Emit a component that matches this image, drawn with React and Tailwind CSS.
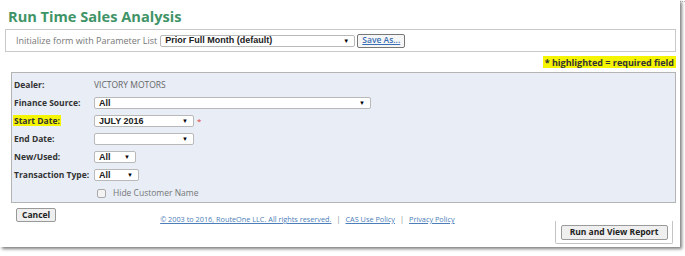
// Run Time Sales Analysis form

const rows = [
  { label: 'Finance Source:', value: 'All', width: 'w-[277px]' },
  { label: 'Start Date:', value: 'JULY 2016', width: 'w-[100px]', required: true },
  { label: 'End Date:', value: '', width: 'w-[100px]' },
  { label: 'New/Used:', value: 'All', width: 'w-[42px]' },
  { label: 'Transaction Type:', value: 'All', width: 'w-[45px]' },
]

function Select({ value, className = '' }) {
  return (
    <div
      className={`h-[12px] bg-white border border-[#b9b9b9] rounded-[2px] flex items-center justify-between pl-[4px] pr-[5px] font-['Liberation_Sans',sans-serif] font-bold text-[9px] text-[#222] leading-none ${className}`}
    >
      <span>{value}</span>
      <span className="text-[6px] text-black">▼</span>
    </div>
  )
}

export default function App() {
  return (
    <div className="w-[685px] h-[256px] bg-white relative overflow-hidden font-['Open_Sans',sans-serif]">
      {/* dotted top edge */}
      <div className="border-t border-dotted border-[#b5b5b5] mt-[1px]" />

      <div className="w-[680px] h-[247px] -mt-[2px] bg-white shadow-[2px_2px_3px_rgba(0,0,0,0.5)] pl-[5px] pr-[4px] flex flex-col">
        <h1 className="mt-[8px] pl-[3px] text-[14.6px] leading-[17px] font-bold text-[#3f9467]">
          Run Time Sales Analysis
        </h1>

        {/* parameter list */}
        <div className="mt-[4px] h-[23px] w-[671px] border border-[#c9c9c9] flex items-center pl-[10px]">
          <span className="text-[9px] text-[#777] mr-[3px]">Initialize form with Parameter List</span>
          <Select value="Prior Full Month (default)" className="w-[195px]" />
          <button className="ml-[2px] h-[14px] px-[4px] border border-[#777] rounded-[2px] bg-[#f6f6f6] text-[8.5px] leading-none font-semibold text-[#3a6fb5] underline">
            Save As...
          </button>
        </div>

        <div className="mt-[4px] w-[671px] flex justify-end">
          <span className="bg-[#f5f500] px-[2px] h-[12px] flex items-center text-[9px] font-bold text-[#333] leading-none">
            * highlighted = required field
          </span>
        </div>

        {/* form panel */}
        <div className="mt-[4px] ml-[6px] w-[665px] h-[131px] bg-[#e8edf6] border border-[#b4b4b4] pt-[4px] pl-[1px]">
          <div className="h-[17px] flex items-center">
            <span className="w-[81px] pl-[1px] text-[8.5px] font-bold text-[#333]">Dealer:</span>
            <span className="text-[8.5px] text-[#666]">VICTORY MOTORS</span>
          </div>
          {rows.map((row) => (
            <div key={row.label} className="h-[18px] flex items-center">
              <span className="w-[81px] shrink-0 text-[8.5px] font-bold text-[#333] whitespace-nowrap">
                <span className={row.required ? 'bg-[#f5f500] px-[1px]' : 'px-[1px]'}>{row.label}</span>
              </span>
              <Select value={row.value} className={row.width} />
              {row.required && <span className="ml-[3px] text-[8px] text-[#e04040] leading-none">*</span>}
            </div>
          ))}
          <div className="h-[19px] flex items-center pl-[84px]">
            <span className="w-[9px] h-[9px] border border-[#aaa] rounded-[2px] bg-[#f3f3f3] mr-[7px]" />
            <span className="text-[8.5px] text-[#777]">Hide Customer Name</span>
          </div>
        </div>

        {/* footer */}
        <div className="flex-1 flex items-start w-[671px] pl-[11px]">
          <div className="pt-[5px] flex">
            <button className="h-[14px] px-[5px] border border-[#999] rounded-[2px] bg-[#efefef] text-[8.5px] font-bold leading-none text-[#222]">
              Cancel
            </button>
          </div>
          <div className="pt-[13px] pl-[104px] text-[7.3px] text-[#4c7eb9] flex gap-[5px] leading-none">
            <span className="underline">© 2003 to 2016, RouteOne LLC. All rights reserved.</span>
            <span className="text-[#888]">|</span>
            <span className="underline">CAS Use Policy</span>
            <span className="text-[#888]">|</span>
            <span className="underline">Privacy Policy</span>
          </div>
          <div className="ml-auto mr-[3px] mt-[18px] h-[23px] w-[118px] border-l border-r border-b border-[#c4c4c4] rounded-b-[2px] flex items-start justify-center pt-[4px]">
            <button className="h-[15px] w-[107px] border border-[#9a9a9a] rounded-[2px] bg-[#efefef] text-[8.5px] font-bold leading-none text-[#222]">
              Run and View Report
            </button>
          </div>
        </div>
      </div>
    </div>
  )
}
